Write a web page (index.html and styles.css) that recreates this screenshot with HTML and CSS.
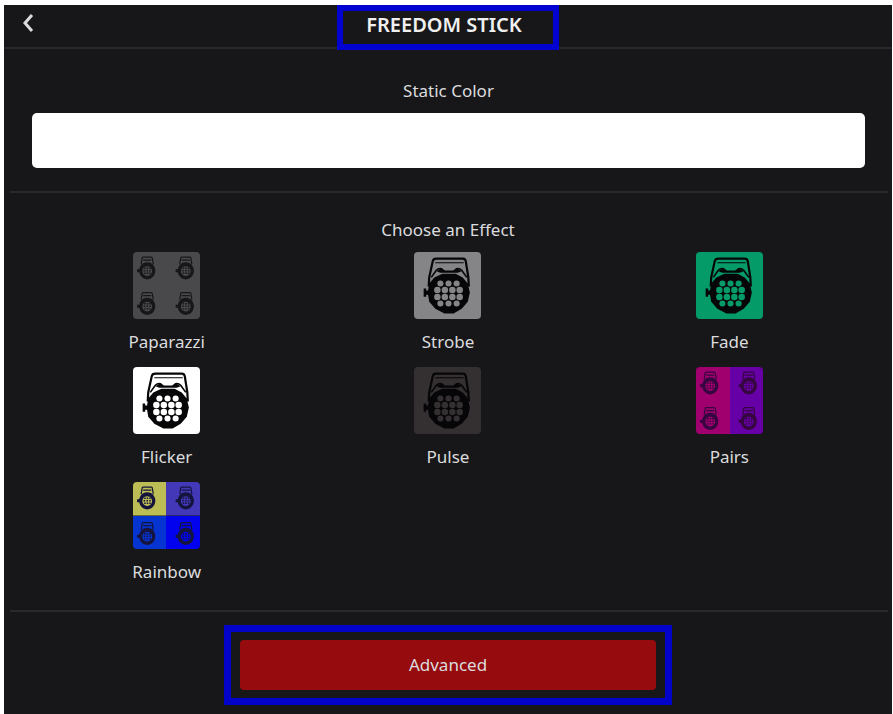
FILE: index.html
```html
<!DOCTYPE html>
<html lang="en">
<head>
  <meta charset="UTF-8">
  <meta name="viewport" content="width=device-width, initial-scale=1">
  <title>Freedom Stick</title>
  <link rel="stylesheet" href="styles.css">
</head>
<body>
  <!-- shared par can shape, the LEDs are cut out so the tile shows through -->
  <svg class="sprite" aria-hidden="true">
    <defs>
      <mask id="leds" maskUnits="userSpaceOnUse" x="0" y="0" width="66" height="66">
        <rect width="66" height="66" fill="#fff"/>
        <g fill="#000">
          <circle cx="26" cy="31" r="3"/><circle cx="34" cy="31" r="3"/><circle cx="42" cy="31" r="3"/>
          <circle cx="23" cy="37.5" r="3.2"/><circle cx="30.4" cy="37.5" r="3.2"/><circle cx="37.8" cy="37.5" r="3.2"/><circle cx="45" cy="37.5" r="3.2"/>
          <circle cx="23" cy="44.3" r="3.2"/><circle cx="30.4" cy="44.3" r="3.2"/><circle cx="37.8" cy="44.3" r="3.2"/><circle cx="45" cy="44.3" r="3.2"/>
          <circle cx="26" cy="50.8" r="3"/><circle cx="34" cy="50.8" r="3"/><circle cx="42" cy="50.8" r="3"/>
        </g>
      </mask>
      <g id="lampBody">
        <path d="M9.500 36H12V38H15V42H12V44H9.500Z" fill="currentColor"/>
        <path d="M28 21.500H41L48 25 53 31 55 40 53 49 47 56 39 60.500H30L21 56 15 49 13.500 40 15 31 20 25Z" fill="currentColor" mask="url(#leds)"/>
      </g>
      <symbol id="lamp" viewBox="0 0 66 66">
        <path d="M14.500 34 15 25 18.500 9Q19 6.500 22 6.500H48Q50.500 6.500 51 9L53.500 25 54 34" fill="none" stroke="currentColor" stroke-width="2.200"/>
        <path d="M21 10.500H49" stroke="currentColor" stroke-width="1"/>
        <path d="M17 25 22 18Q24 16 27 16.500L30 19H39L42 16.500Q45 16 47 18L52 25" fill="none" stroke="currentColor" stroke-width="1.600"/>
        <path d="M22 19 27 16 31 19H38L42 16 47 19 43 20.500H26Z" fill="currentColor"/>
        <use href="#lampBody"/>
      </symbol>
      <!-- the small version has a heavier body and a short yoke -->
      <symbol id="miniLamp" viewBox="0 0 22 26">
        <path d="M5 9 6 3Q6 2 7 2H15Q16 2 16 3L17 9M7 5H15" fill="none" stroke="currentColor" stroke-width="1.200"/>
        <path d="M1 14H4V17H1Z" fill="currentColor"/>
        <path fill="currentColor" fill-rule="evenodd" d="M11 7a8 8.500 0 1 0 .01 0ZM11 11a4.800 4.800 0 1 1-.01 0Z"/>
        <path d="M8 13h1.500M10.500 13H12M13 13h1.500M7.500 15.500H9M10.300 15.500h1.500M13 15.500h1.500M8 18h1.500M10.500 18H12M13 18h1.500" stroke="currentColor" stroke-width="1.400"/>
      </symbol>
      <symbol id="lamps" viewBox="0 0 66 66">
        <use href="#miniLamp" width="22" height="26" x="3" y="3"/>
        <use href="#miniLamp" width="22" height="26" x="41" y="3"/>
        <use href="#miniLamp" width="22" height="26" x="3" y="38"/>
        <use href="#miniLamp" width="22" height="26" x="41" y="38"/>
      </symbol>
    </defs>
  </svg>

  <div class="app">
    <header class="topbar">
      <button class="back" type="button" aria-label="Back">
        <svg width="14" height="20" viewBox="0 0 14 20"><path d="M11 2 4 10l7 8" fill="none" stroke="currentColor" stroke-width="3"/></svg>
      </button>
      <h1 class="title">FREEDOM STICK</h1>
    </header>

    <main>
      <section class="static-color">
        <h2 id="colorLabel">Static Color</h2>
        <button class="swatch" type="button" aria-labelledby="colorLabel"></button>
      </section>

      <section class="effects">
        <h2>Choose an Effect</h2>
        <div class="effect-grid">
          <button class="effect" type="button">
            <svg class="tile paparazzi" viewBox="0 0 66 66"><use href="#lamps"/></svg>
            <span>Paparazzi</span>
          </button>
          <button class="effect" type="button">
            <svg class="tile strobe" viewBox="0 0 66 66"><use href="#lamp"/></svg>
            <span>Strobe</span>
          </button>
          <button class="effect" type="button">
            <svg class="tile fade" viewBox="0 0 66 66"><use href="#lamp"/></svg>
            <span>Fade</span>
          </button>
          <button class="effect" type="button">
            <svg class="tile flicker" viewBox="0 0 66 66"><use href="#lamp"/></svg>
            <span>Flicker</span>
          </button>
          <button class="effect" type="button">
            <svg class="tile pulse" viewBox="0 0 66 66"><use href="#lamp"/></svg>
            <span>Pulse</span>
          </button>
          <button class="effect" type="button">
            <svg class="tile pairs" viewBox="0 0 66 66"><use href="#lamps"/></svg>
            <span>Pairs</span>
          </button>
          <button class="effect" type="button">
            <svg class="tile rainbow" viewBox="0 0 66 66"><use href="#lamps"/></svg>
            <span>Rainbow</span>
          </button>
        </div>
      </section>
    </main>

    <footer class="actions">
      <div class="highlight">
        <button class="advanced" type="button">Advanced</button>
      </div>
    </footer>
  </div>
</body>
</html>
```
FILE: styles.css
```css
* { box-sizing: border-box; }
body {
  margin: 0;
  padding: 5px 1px 0 4px;
  background: #fff;
  color: #dcdcde;
  font-family: "Noto Sans", sans-serif;
  font-size: 17px;
  line-height: 24px;
}
button {
  font: inherit;
  color: inherit;
  border: 0;
  padding: 0;
  background: none;
  cursor: pointer;
}
h1, h2 { margin: 0; }
h2 {
  font-size: 17px;
  font-weight: 400;
  text-align: center;
}
.sprite {
  position: absolute;
  width: 0;
  height: 0;
}
.app {
  min-height: calc(100vh - 5px);
  background: #17171a;
}

/* top bar */
.topbar {
  display: grid;
  grid-template-columns: 1fr auto 1fr;
  height: 44px;
  border-bottom: 2px solid #29292d;
}
.back {
  justify-self: start;
  align-self: start;
  padding: 8px 17px;
  line-height: 0;
}
.title {
  height: 45px;
  padding: 0 31px 0 23px;
  border: 6px solid #0202d0;
  color: #f0f0f0;
  font-size: 20px;
  font-weight: 600;
  line-height: 28px;
}

/* static color */
.static-color {
  margin: 0 4px 0 6px;
  padding: 30px 23px 23px 22px;
  border-bottom: 2px solid #29292d;
}
.swatch {
  display: block;
  width: 100%;
  height: 55px;
  margin-top: 10px;
  border-radius: 5px;
  background: #fff;
}

/* effects */
.effects {
  margin: 0 4px 0 6px;
  padding: 25px 18px 26px 16px;
  border-bottom: 2px solid #29292d;
}
.effect-grid {
  display: grid;
  grid-template-columns: repeat(3, 1fr);
  row-gap: 13px;
  margin-top: 10px;
}
.effect {
  display: flex;
  flex-direction: column;
  align-items: center;
  gap: 11px;
}
.tile {
  width: 67px;
  height: 67px;
  border-radius: 4px;
  color: #060608;
}
.paparazzi { background: #49494c; color: #17171a; }
.strobe { background: #858587; }
.fade { background: #059b69; }
.flicker { background: #fff; }
.pulse { background: #342f30; }
.pairs {
  background: linear-gradient(90deg, #a0006e 50%, #6600a6 50%);
  color: #35063f;
}
.rainbow {
  background:
    linear-gradient(90deg, #bdbd55 50%, #4338b8 50%) top / 100% 50% no-repeat,
    linear-gradient(90deg, #0634d0 50%, #0202ee 50%) bottom / 100% 50% no-repeat;
  color: #14143c;
}

/* bottom action */
.actions {
  display: flex;
  justify-content: center;
  padding: 13px 20px 9px;
}
.highlight {
  width: 100%;
  max-width: 448px;
  padding: 8px 9px;
  border: 7px solid #0202c8;
}
.advanced {
  display: block;
  width: 100%;
  height: 50px;
  border-radius: 4px;
  background: #960b0e;
}
```
